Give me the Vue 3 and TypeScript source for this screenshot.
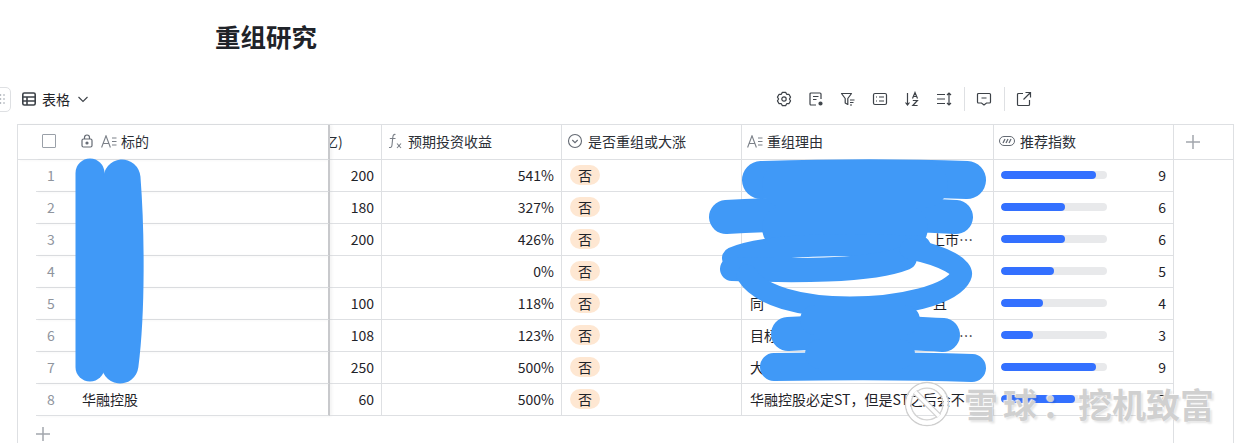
<script setup lang="ts">
interface Row { n: number; name: string; cap: string; gain: string; left: string; right: string; pad: number; score: number }
const rows: Row[] = [
  { n: 1, name: '', cap: '200', gain: '541%', left: '', right: '', pad: 20, score: 9 },
  { n: 2, name: '', cap: '180', gain: '327%', left: '', right: '', pad: 20, score: 6 },
  { n: 3, name: '', cap: '200', gain: '426%', left: '', right: '上市…', pad: 20, score: 6 },
  { n: 4, name: '', cap: '', gain: '0%', left: '', right: '', pad: 20, score: 5 },
  { n: 5, name: '', cap: '100', gain: '118%', left: '同', right: '且', pad: 46, score: 4 },
  { n: 6, name: '', cap: '108', gain: '123%', left: '目标', right: '…', pad: 20, score: 3 },
  { n: 7, name: '', cap: '250', gain: '500%', left: '大', right: '', pad: 20, score: 9 },
  { n: 8, name: '华融控股', cap: '60', gain: '500%', left: '华融控股必定ST，但是ST之后会不…', right: '', pad: 7, score: 7 },
]
</script>

<template>
  <div class="page">
    <h1 class="title">重组研究</h1>

    <div class="toolbar">
      <div class="view">
        <span class="grip">
          <svg width="8" height="12" viewBox="0 0 8 12" fill="#9aa0a8"><circle cx="1.5" cy="2" r=".8"/><circle cx="5" cy="2" r=".8"/><circle cx="1.5" cy="6" r=".8"/><circle cx="5" cy="6" r=".8"/><circle cx="1.5" cy="10" r=".8"/><circle cx="5" cy="10" r=".8"/></svg>
        </span>
        <svg class="ico" width="14" height="14" viewBox="0 0 14 14" fill="none" stroke="#3d4248" stroke-width="1.6"><rect x=".8" y="1" width="12.4" height="12" rx="1.5"/><path d="M.8 5h12.4M.8 9h12.4M5 5v8"/></svg>
        <span class="view-name">表格</span>
        <svg width="12" height="12" viewBox="0 0 12 12" fill="none" stroke="#3d4248" stroke-width="1.1"><path d="M1.5 4l4.5 4.500L10.500 4"/></svg>
      </div>
      <div class="tools">
        <svg width="16" height="16" viewBox="0 0 16 16" fill="none" stroke="#3d4248" stroke-width="1.2" stroke-linejoin="round"><path d="M6.350 1.400H9.650L10.700 3.320L12.890 3.280L14.540 6.130L13.400 8L14.540 9.870L12.890 12.720L10.700 12.680L9.650 14.600H6.350L5.300 12.680L3.110 12.720L1.460 9.870L2.600 8L1.460 6.130L3.110 3.280L5.300 3.320Z"/><circle cx="8" cy="8" r="2.200"/></svg>
        <svg width="16" height="16" viewBox="0 0 16 16" fill="none" stroke="#3d4248" stroke-width="1.2"><path d="M8 14H3a1 1 0 0 1-1-1V3a1 1 0 0 1 1-1h9a1 1 0 0 1 1 1v5M5 5.500h5.500M5 8.500h3.500"/><circle cx="12.500" cy="12.500" r="1.500" fill="#3d4248"/></svg>
        <svg width="16" height="16" viewBox="0 0 16 16" fill="none" stroke="#3d4248" stroke-width="1.2"><path d="M1.500 2.500h10L7.800 7.500v6L5.200 12V7.500zM10 9h4.500M10 11.500h3.500M10 14h2" stroke-linejoin="round"/></svg>
        <svg width="16" height="16" viewBox="0 0 16 16" fill="none" stroke="#3d4248" stroke-width="1.2"><rect x="1.500" y="2.500" width="13" height="11" rx="1.500"/><path d="M4 6h1M4 10h1M7 6h5M7 10h5"/></svg>
        <svg width="16" height="16" viewBox="0 0 16 16" fill="none" stroke="#3d4248" stroke-width="1.200"><path d="M3.500 2v12M1.500 11.500l2 2.500 2-2.500M8.500 7.500L11 1.500l2.500 6M9.400 5.500h3.200M8.800 9.500h4.600l-4.600 5h4.800"/></svg>
        <svg width="16" height="16" viewBox="0 0 16 16" fill="none" stroke="#3d4248" stroke-width="1.200"><path d="M1 3.500h8M1 8h8M1 12.500h8M13 2v12M11 4l2-2 2 2M11 12l2 2 2-2"/></svg>
        <i class="sep"></i>
        <svg width="16" height="16" viewBox="0 0 16 16" fill="none" stroke="#3d4248" stroke-width="1.200"><path d="M2.500 2.500h11a1 1 0 0 1 1 1v7.500a1 1 0 0 1-1 1h-3L8 14l-2.500-2h-3a1 1 0 0 1-1-1V3.500a1 1 0 0 1 1-1zM5.500 7h5"/></svg>
        <i class="sep"></i>
        <svg width="16" height="16" viewBox="0 0 16 16" fill="none" stroke="#3d4248" stroke-width="1.200"><path d="M7 2.500H2.500a1 1 0 0 0-1 1V13.500a1 1 0 0 0 1 1h10a1 1 0 0 0 1-1V9M9.500 1.500h5v5M14.500 1.500L7.500 8.500"/></svg>
      </div>
    </div>

    <div class="table">
      <div class="row head">
        <div class="cell frozen head-first">
          <span class="check"></span>
          <svg class="lock" width="12" height="14" viewBox="0 0 12 14" fill="none" stroke="#646a73" stroke-width="1.200"><rect x="1" y="5" width="10" height="8" rx="1.500"/><path d="M3.500 5V3.500a2.500 2.500 0 0 1 5 0V5"/><circle cx="6" cy="9" r="1" fill="#646a73"/></svg>
          <svg class="afield" width="16" height="13" viewBox="0 0 16 13" fill="none" stroke="#7b8088" stroke-width="1.100"><path d="M.6 12.500L5 .8l4.400 11.700M2.200 8.500h5.600M11 3h4.500M11 6.500h4.500M11 10h4.500"/></svg>
          <span>标的</span>
        </div>
        <div class="cell clipped"><span>亿)</span></div>
        <div class="cell">
          <svg class="fi" width="16" height="16" viewBox="0 0 16 16" fill="none" stroke="#7b8088" stroke-width="1.100"><path d="M8.500 1.500C6.500 1 6 2.500 5.800 4.500L5 12c-.2 2-1 2.800-3 2.500M2.800 5.500h5.700M10 10.500l4 4.500M14 10.500l-4 4.500"/></svg>
          <span>预期投资收益</span>
        </div>
        <div class="cell">
          <svg class="fi" width="16" height="16" viewBox="0 0 16 16" fill="none" stroke="#646a73" stroke-width="1.100"><circle cx="8" cy="8" r="6.500"/><path d="M5.300 7l2.700 2.700L10.700 7"/></svg>
          <span>是否重组或大涨</span>
        </div>
        <div class="cell">
          <svg class="afield" width="16" height="13" viewBox="0 0 16 13" fill="none" stroke="#7b8088" stroke-width="1.100"><path d="M.6 12.500L5 .8l4.400 11.700M2.200 8.500h5.600M11 3h4.500M11 6.500h4.500M11 10h4.500"/></svg>
          <span>重组理由</span>
        </div>
        <div class="cell">
          <svg class="fi" width="16" height="10" viewBox="0 0 16 10" fill="none" stroke="#646a73" stroke-width="1"><rect x=".5" y=".5" width="15" height="9" rx="4.500"/><path d="M4 7l2-4M7 7l2-4M10 7l2-4" stroke-width="1.300"/></svg>
          <span>推荐指数</span>
        </div>
        <div class="cell add-col">
          <svg width="14" height="14" viewBox="0 0 14 14" stroke="#a2a6ad" stroke-width="1.500"><path d="M7 0v14M0 7h14"/></svg>
        </div>
      </div>

      <div v-for="r in rows" :key="r.n" class="row">
        <div class="cell frozen">
          <span class="num">{{ r.n }}</span>
          <span class="name">{{ r.name }}</span>
        </div>
        <div class="cell right">{{ r.cap }}</div>
        <div class="cell right">{{ r.gain }}</div>
        <div class="cell"><span class="tag">否</span></div>
        <div class="cell reason" :style="{ paddingRight: r.pad + 'px' }"><span class="clip">{{ r.left }}</span><span>{{ r.right }}</span></div>
        <div class="cell score">
          <span class="track"><span class="fill" :style="{ width: r.score * 10.6 + 'px' }"></span></span>
          <span>{{ r.score }}</span>
        </div>
        <div class="blank"></div>
      </div>

      <div class="row foot">
        <div class="add-row">
          <svg width="14" height="14" viewBox="0 0 14 14" stroke="#a2a6ad" stroke-width="1.500"><path d="M7 0v14M0 7h14"/></svg>
        </div>
        <div class="blank"></div>
      </div>

      <svg class="scribble" width="1248" height="443" viewBox="0 0 1248 443" fill="none" stroke="#4099f7" stroke-linecap="round" stroke-linejoin="round">
        <path stroke-width="29" d="M90 173C90 230 90 310 90 367"/>
        <path stroke-width="37" d="M122 178C126 230 127 310 120 365"/>
        <path stroke-width="8" d="M105 180V362"/>
        <path stroke-width="38" d="M761 180C830 178 910 178 967 180"/>
        <path stroke-width="34" d="M726 217C800 213 890 213 956 217"/>
        <path stroke-width="46" d="M785 185H925M785 228H905"/>
        <path stroke-width="22" d="M733 258C765 244 850 243 920 247"/>
        <path stroke-width="24" d="M732 269C790 271 870 272 905 258"/>
        <path stroke-width="21" d="M910 249C945 256 965 268 961 276C952 295 900 307 850 307C800 307 760 296 747 275"/>
        <path stroke-width="34" d="M788 334C830 332 900 332 943 335"/>
        <path stroke-width="28" d="M774 367C830 366 920 366 972 368"/>
        <path stroke-width="30" d="M815 320H905M820 354H900"/>
      </svg>

      <div class="mark">
        <svg width="46" height="46" viewBox="0 0 46 46" fill="none"><circle cx="23" cy="23" r="21.500" stroke="#cfcfcf" stroke-width="1.500"/><circle cx="23" cy="23" r="16" stroke="#d4d4d4" stroke-width="1.500"/><circle cx="23" cy="23" r="18.800" stroke="#fff" stroke-width="4"/><path d="M11 11l24 24" stroke="#d0d0d0" stroke-width="6"/><path d="M11 11l24 24" stroke="#fff" stroke-width="3.500"/></svg>
        <span class="mark-a">雪球</span><span class="mark-b">：</span><span class="mark-c">挖机致富</span>
      </div>
    </div>
  </div>
</template>

<style scoped>
.page {
  height: 443px;
  overflow: hidden;
  position: relative;
  background: #fff;
  color: #1f2329;
  font-family: "Noto Sans CJK SC", "Noto Sans", sans-serif;
  font-size: 14px;
}
.title {
  margin: 0;
  padding: 18px 0 0 215px;
  height: 83px;
  box-sizing: border-box;
  font-size: 25.5px;
  line-height: 36px;
  font-weight: 700;
}
.toolbar {
  height: 32px;
  margin-bottom: 9px;
  padding-right: 216px;
  display: flex;
  align-items: center;
  justify-content: space-between;
}
.view { display: flex; align-items: center; }
.grip {
  width: 23px;
  height: 25px;
  margin-left: -12px;
  margin-right: 11px;
  display: flex;
  align-items: center;
  justify-content: flex-end;
  padding-right: 3px;
  box-sizing: border-box;
  border: 1px solid #dee0e3;
  border-radius: 5px;
}
.view-name { margin: 0 7px 0 6px; color: #1f2329; font-size: 14px; }
.tools { display: flex; align-items: center; gap: 16px; }
.sep { width: 1px; height: 24px; background: #dee0e3; margin: 0 -4.5px; }
.table {
  margin-left: 17px;
  width: 1217px;
  height: 319px;
  border-left: 1px solid #dee0e3;
  border-top: 1px solid #dee0e3;
  box-sizing: border-box;
}
.row {
  display: grid;
  grid-template-columns: 312px 52px 180px 180px 252px 180px 60px;
  height: 32px;
}
.row.head { height: 35px; }
.cell {
  box-sizing: border-box;
  display: flex;
  align-items: center;
  padding: 0 7px 1px 8px;
  border-right: 1px solid #dee0e3;
  border-bottom: 1px solid #dee0e3;
  white-space: nowrap;
  overflow: hidden;
  min-width: 0;
}
.head .cell { color: #2b2f36; font-size: 14px; padding-left: 5px; padding-bottom: 2px; }
.frozen {
  margin-left: 18px;
  padding: 0 0 1px;
  border-right: 2px solid #c8c9cc;
  box-shadow: 2px 0 3px rgba(0, 0, 0, .05);
}
.head .head-first { margin-left: 0; padding-left: 24px; }
.check {
  width: 14px;
  height: 14px;
  box-sizing: border-box;
  border: 1.500px solid #9aa0a8;
  border-radius: 1px;
  margin-right: 25px;
}
.lock { margin-right: 8px; }
.afield { margin-right: 4px; flex: none; }
.fi { margin-right: 5px; flex: none; }
.clipped span { margin-left: -11px; }
.add-col { padding: 0 0 0 12px !important; }
.num { width: 30px; text-align: center; color: #8f959e; font-size: 14px; }
.name { margin-left: 16px; }
.right { justify-content: flex-end; }
.tag {
  width: 30px;
  height: 20px;
  line-height: 20px;
  text-align: center;
  border-radius: 10px;
  background: #fee7d2;
}
.reason { justify-content: space-between; gap: 8px; }
.clip { overflow: hidden; }
.score { justify-content: space-between; padding-left: 7px; padding-right: 7px; }
.track {
  display: block;
  width: 106px;
  height: 8px;
  border-radius: 4px;
  background: #e8e9eb;
  overflow: hidden;
}
.fill { display: block; height: 8px; border-radius: 4px; background: #3370ff; }
.blank { grid-column: 7; border-right: 1px solid #dee0e3; }
.foot { height: 40px; }
.add-row {
  grid-column: 1 / 7;
  padding: 9px 0 0 18px;
  border-right: 1px solid #dee0e3;
}
.scribble { position: absolute; left: 0; top: 0; pointer-events: none; }
.mark {
  position: absolute;
  left: 904px;
  top: 381px;
  display: flex;
  align-items: center;
  font-size: 34px;
  font-weight: 700;
  line-height: 46px;
  color: rgba(190, 190, 190, .72);
  text-shadow: 0 0 1px #fff, -1px -1px 1px rgba(255, 255, 255, .9), 2px 2px 2px rgba(0, 0, 0, .1);
  white-space: nowrap;
}
.mark-a { margin-left: 14px; letter-spacing: 5px; }
.mark-b { width: 36px; }
.mark-c { letter-spacing: 0; }
</style>
